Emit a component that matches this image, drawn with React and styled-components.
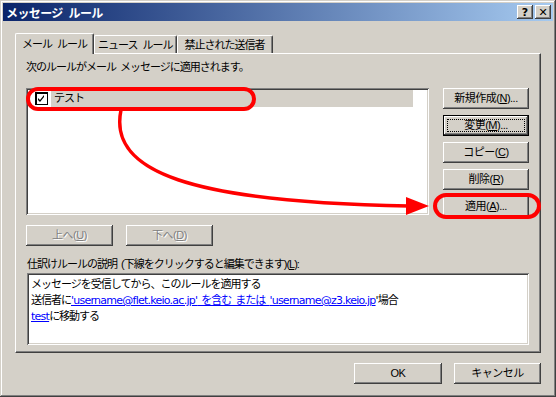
import React from 'react';
import styled, { createGlobalStyle } from 'styled-components';

const GlobalStyle = createGlobalStyle`
  html, body {
    margin: 0;
    padding: 0;
    background: #D4D0C8;
  }
  body {
    font-family: "Liberation Sans", "Noto Sans CJK JP", sans-serif;
    font-size: 11px;
    letter-spacing: -1px;
    color: #000;
  }
`;

const Window = styled.div`
  position: relative;
  width: 556px;
  height: 397px;
  box-sizing: border-box;
  padding: 3px;
  background: #D4D0C8;
  box-shadow: inset -1px -1px #404040, inset 1px 1px #D4D0C8,
    inset -2px -2px #808080, inset 2px 2px #fff;
  display: flex;
  flex-direction: column;
`;

const TitleBar = styled.div`
  height: 18px;
  background: linear-gradient(to right, #0A246A, #A6CAF0);
  display: flex;
  align-items: center;
  padding: 0 2px 0 3px;
  color: #fff;
  font-weight: bold;
  font-size: 12px;
  letter-spacing: -0.6px;
  word-spacing: 3px;
`;

const Title = styled.span`
  flex: 1;
`;

const CaptionButton = styled.div`
  width: 16px;
  height: 14px;
  box-sizing: border-box;
  margin-left: ${(p) => (p.gap ? '2px' : '0')};
  background: #D4D0C8;
  box-shadow: inset -1px -1px #404040, inset 1px 1px #fff,
    inset -2px -2px #808080;
  color: #000;
  font-family: "DejaVu Sans", sans-serif;
  font-size: 11px;
  font-weight: bold;
  letter-spacing: 0;
  display: flex;
  align-items: center;
  justify-content: center;
  line-height: 1;
`;

const Body = styled.div`
  padding: 12px 12px 0 12px;
  display: flex;
  flex-direction: column;
`;

const TabRow = styled.div`
  display: flex;
  align-items: flex-end;
  height: 20px;
`;

const Tab = styled.div`
  height: ${(p) => (p.active ? '21px' : '18px')};
  margin-bottom: ${(p) => (p.active ? '-1px' : '0')};
  position: relative;
  z-index: ${(p) => (p.active ? 1 : 0)};
  box-sizing: border-box;
  padding: ${(p) => (p.active ? '3px 6px 0 6px' : `2px ${p.pad || 3}px 0 ${p.pad || 3}px`)};
  background: #D4D0C8;
  border-top: 1px solid #fff;
  border-left: 1px solid #fff;
  border-right: 1px solid #404040;
  border-radius: 2px 2px 0 0;
  box-shadow: inset -1px 0 #808080;
  line-height: 14px;
  white-space: nowrap;
  word-spacing: 3px;
`;

const Panel = styled.div`
  height: 300px;
  box-sizing: border-box;
  border: 1px solid;
  border-color: #fff #404040 #404040 #fff;
  box-shadow: inset -1px -1px #808080;
  padding: 6px 10px 0 10px;
  display: flex;
  flex-direction: column;
`;

const Label = styled.div`
  height: 14px;
  line-height: 14px;
  margin-top: ${(p) => p.top || 0}px;
  margin-left: ${(p) => p.indent || 0}px;
  white-space: nowrap;
  word-spacing: 2px;
`;

const TopGrid = styled.div`
  margin-top: 14px;
  display: grid;
  grid-template-columns: 403px 86px;
  column-gap: 14px;
`;

const ListBox = styled.div`
  height: 127px;
  box-sizing: border-box;
  background: #fff;
  padding: 2px;
  box-shadow: inset 1px 1px #808080, inset -1px -1px #fff,
    inset 2px 2px #404040, inset -2px -2px #D4D0C8;
`;

const ListRow = styled.div`
  display: flex;
  align-items: center;
  height: 17px;
`;

const CheckBox = styled.span`
  width: 13px;
  height: 13px;
  box-sizing: border-box;
  margin: 0 3px 0 7px;
  border: 1px solid #000;
  box-shadow: inset 1px 1px #000;
  background: #fff;
  display: flex;
  align-items: center;
  justify-content: center;
`;

const RowHighlight = styled.span`
  width: 362px;
  height: 17px;
  box-sizing: border-box;
  padding-left: 3px;
  background: #D4D0C8;
  line-height: 17px;
`;

const ButtonColumn = styled.div`
  display: flex;
  flex-direction: column;
  gap: 6px;
`;

const Button = styled.div`
  width: ${(p) => p.w || 86}px;
  height: 21px;
  box-sizing: border-box;
  position: relative;
  background: #D4D0C8;
  display: flex;
  align-items: center;
  justify-content: center;
  line-height: 1;
  white-space: nowrap;
  letter-spacing: -0.5px;
  color: ${(p) => (p.disabled ? '#808080' : '#000')};
  text-shadow: ${(p) => (p.disabled ? '1px 1px #fff' : 'none')};
  border: ${(p) => (p.isDefault ? '1px solid #000' : '0')};
  box-shadow: inset -1px -1px #404040, inset 1px 1px #fff,
    inset -2px -2px #808080, inset 2px 2px #D4D0C8;

  u {
    text-decoration: underline;
  }
`;

const FocusRing = styled.span`
  position: absolute;
  inset: 3px;
  border: 1px dotted #000;
`;

const MoveRow = styled.div`
  margin-top: 8px;
  display: flex;
  gap: 13px;
`;

const DescBox = styled.div`
  margin: 2px 1px 0 1px;
  height: 72px;
  box-sizing: border-box;
  background: #fff;
  padding: 3px 4px;
  box-shadow: inset 1px 1px #808080, inset -1px -1px #fff,
    inset 2px 2px #404040, inset -2px -2px #D4D0C8;
`;

const DescLine = styled.div`
  height: 16px;
  line-height: 16px;
  white-space: nowrap;
  word-spacing: 2px;
`;

const RuleLink = styled.span`
  color: #0000ff;
  text-decoration: underline;
`;

const Latin = styled.span`
  font-family: "DejaVu Sans", sans-serif;
  letter-spacing: -0.75px;
`;

const Footer = styled.div`
  margin-top: 10px;
  display: flex;
  justify-content: flex-end;
  gap: 12px;
`;

const Overlay = styled.svg`
  position: absolute;
  left: 0;
  top: 0;
  pointer-events: none;
`;

function Check() {
  return (
    <svg width="9" height="9" viewBox="0 0 9 9">
      <path d="M1 4 L3 6 L7 1 L7 3 L3 8 L1 6 Z" fill="#000" />
    </svg>
  );
}

export default function App() {
  return (
    <>
      <GlobalStyle />
      <Window>
        <TitleBar>
          <Title>メッセージ ルール</Title>
          <CaptionButton>?</CaptionButton>
          <CaptionButton gap>✕</CaptionButton>
        </TitleBar>
        <Body>
          <TabRow>
            <Tab active>メール ルール</Tab>
            <Tab>ニュース ルール</Tab>
            <Tab pad={7}>禁止された送信者</Tab>
          </TabRow>
          <Panel>
            <Label>次のルールがメール メッセージに適用されます。</Label>
            <TopGrid>
              <ListBox>
                <ListRow>
                  <CheckBox><Check /></CheckBox>
                  <RowHighlight>テスト</RowHighlight>
                </ListRow>
              </ListBox>
              <ButtonColumn>
                <Button>新規作成(<u>N</u>)...</Button>
                <Button isDefault>
                  <FocusRing />
                  変更(<u>M</u>)...
                </Button>
                <Button>コピー(<u>C</u>)</Button>
                <Button>削除(<u>R</u>)</Button>
                <Button>適用(<u>A</u>)...</Button>
              </ButtonColumn>
            </TopGrid>
            <MoveRow>
              <Button w={87} disabled>上へ(<u>U</u>)</Button>
              <Button w={87} disabled>下へ(<u>D</u>)</Button>
            </MoveRow>
            <Label top={11} indent={1}>
              仕訳けルールの説明 (下線をクリックすると編集できます)(<u>L</u>):
            </Label>
            <DescBox>
              <DescLine>メッセージを受信してから、このルールを適用する</DescLine>
              <DescLine>
                送信者に<RuleLink><Latin>'username@flet.keio.ac.jp'</Latin> を含む または <Latin>'username@z3.keio.jp</Latin></RuleLink><Latin>'</Latin>場合
              </DescLine>
              <DescLine>
                <RuleLink><Latin>test</Latin></RuleLink>に移動する
              </DescLine>
            </DescBox>
          </Panel>
          <Footer>
            <Button w={88}>OK</Button>
            <Button w={87}>キャンセル</Button>
          </Footer>
        </Body>
        <Overlay width="556" height="397" viewBox="0 0 556 397">
          <rect x="28" y="89" width="226" height="20" rx="10" fill="none" stroke="#f00" strokeWidth="4" />
          <rect x="435" y="195" width="104" height="22" rx="11" fill="none" stroke="#f00" strokeWidth="4" />
          <path d="M121 110 C108 172 190 202 409 206" fill="none" stroke="#f00" strokeWidth="3.5" />
          <polygon points="406,197 429,206 406,215" fill="#f00" />
        </Overlay>
      </Window>
    </>
  );
}
